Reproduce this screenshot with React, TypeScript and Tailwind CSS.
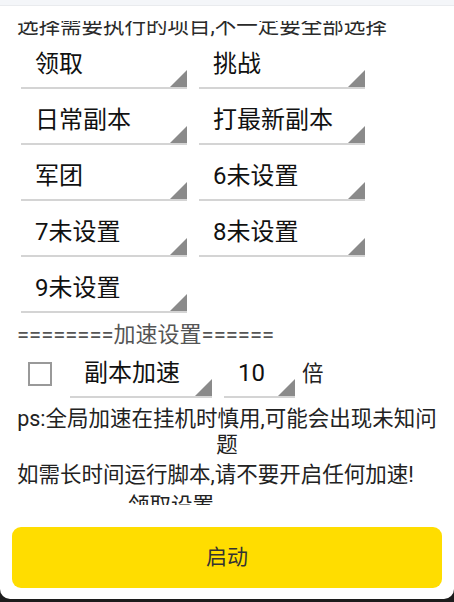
import React from "react";

const FONT = { fontFamily: "Roboto, 'Noto Sans CJK SC', sans-serif" };

function Tri() {
  return (
    <svg width="17" height="17" viewBox="0 0 17 17" className="shrink-0 self-end">
      <polygon points="17,0 17,17 0,17" fill="#8a8a8a" />
    </svg>
  );
}

function Spinner({ label, w, pl = "pl-[14px]" }: { label: string; w: string; pl?: string }) {
  return (
    <div className={`${w} h-[48px] flex border-b-2 border-[#d4d4d4]`}>
      <div className={`flex-1 self-center ${pl} text-[24px] leading-[30px] text-[#111] whitespace-nowrap`}>{label}</div>
      <Tri />
    </div>
  );
}

export default function App() {
  const rows: [string, string | null][] = [
    ["领取", "挑战"],
    ["日常副本", "打最新副本"],
    ["军团", "6未设置"],
    ["7未设置", "8未设置"],
    ["9未设置", null],
  ];
  return (
    <div className="w-[454px] h-[602px] bg-[#1c1c1c] overflow-hidden" style={FONT}>
      <div className="w-[454px] h-[599px] bg-white rounded-b-[10px] flex flex-col">
        <div className="h-[6px] bg-[#f4f6f9] border-b border-[#e9ebee]" />
        <div className="h-[15px]" />
        <div className="h-[484px] overflow-hidden">
          <div className="flex flex-col mt-[-9px]">
            <div className="px-[17px] text-[21.5px] leading-[28px] text-[#2a2a2a] whitespace-nowrap">
              选择需要执行的项目,不一定要全部选择
            </div>
            <div className="flex flex-col gap-[8px] mt-[1px]">
              {rows.map(([a, b], i) => (
                <div key={i} className="flex gap-[12px] pl-[21px]">
                  <Spinner label={a} w="w-[166px]" />
                  {b && <Spinner label={b} w="w-[166px]" />}
                </div>
              ))}
            </div>
            <div className="mt-[8px] px-[17px] text-[22px] leading-[28px] text-[#555] whitespace-nowrap">
              ========加速设置======
            </div>
            <div className="flex items-center mt-[1px] h-[48px]">
              <div className="ml-[28px] w-[24px] h-[24px] border-2 border-[#999] shrink-0" />
              <div className="ml-[18px]">
                <Spinner label="副本加速" w="w-[142px]" />
              </div>
              <div className="ml-[12px]">
                <Spinner label="10" w="w-[71px]" />
              </div>
              <div className="ml-[7px] text-[21.5px] leading-[28px] text-[#222]">倍</div>
            </div>
            <div className="mt-[8px] px-[16px] text-center text-[21.5px] leading-[26px] text-[#222]">
              ps:全局加速在挂机时慎用,可能会出现未知问题
            </div>
            <div className="mt-[4px] px-[17px] text-[21.5px] leading-[26px] text-[#222] whitespace-nowrap">
              如需长时间运行脚本,请不要开启任何加速!
            </div>
            <div className="mt-[5px] pl-[128px] text-[21.5px] leading-[26px] text-[#222] whitespace-nowrap">
              领取设置
            </div>
          </div>
        </div>
        <div className="flex-1 flex flex-col px-[12px] pt-[22px]">
          <button className="h-[61px] w-full rounded-[9px] bg-[#ffdd00] text-[21px] text-[#333] flex items-center justify-center">
            启动
          </button>
        </div>
      </div>
    </div>
  );
}
